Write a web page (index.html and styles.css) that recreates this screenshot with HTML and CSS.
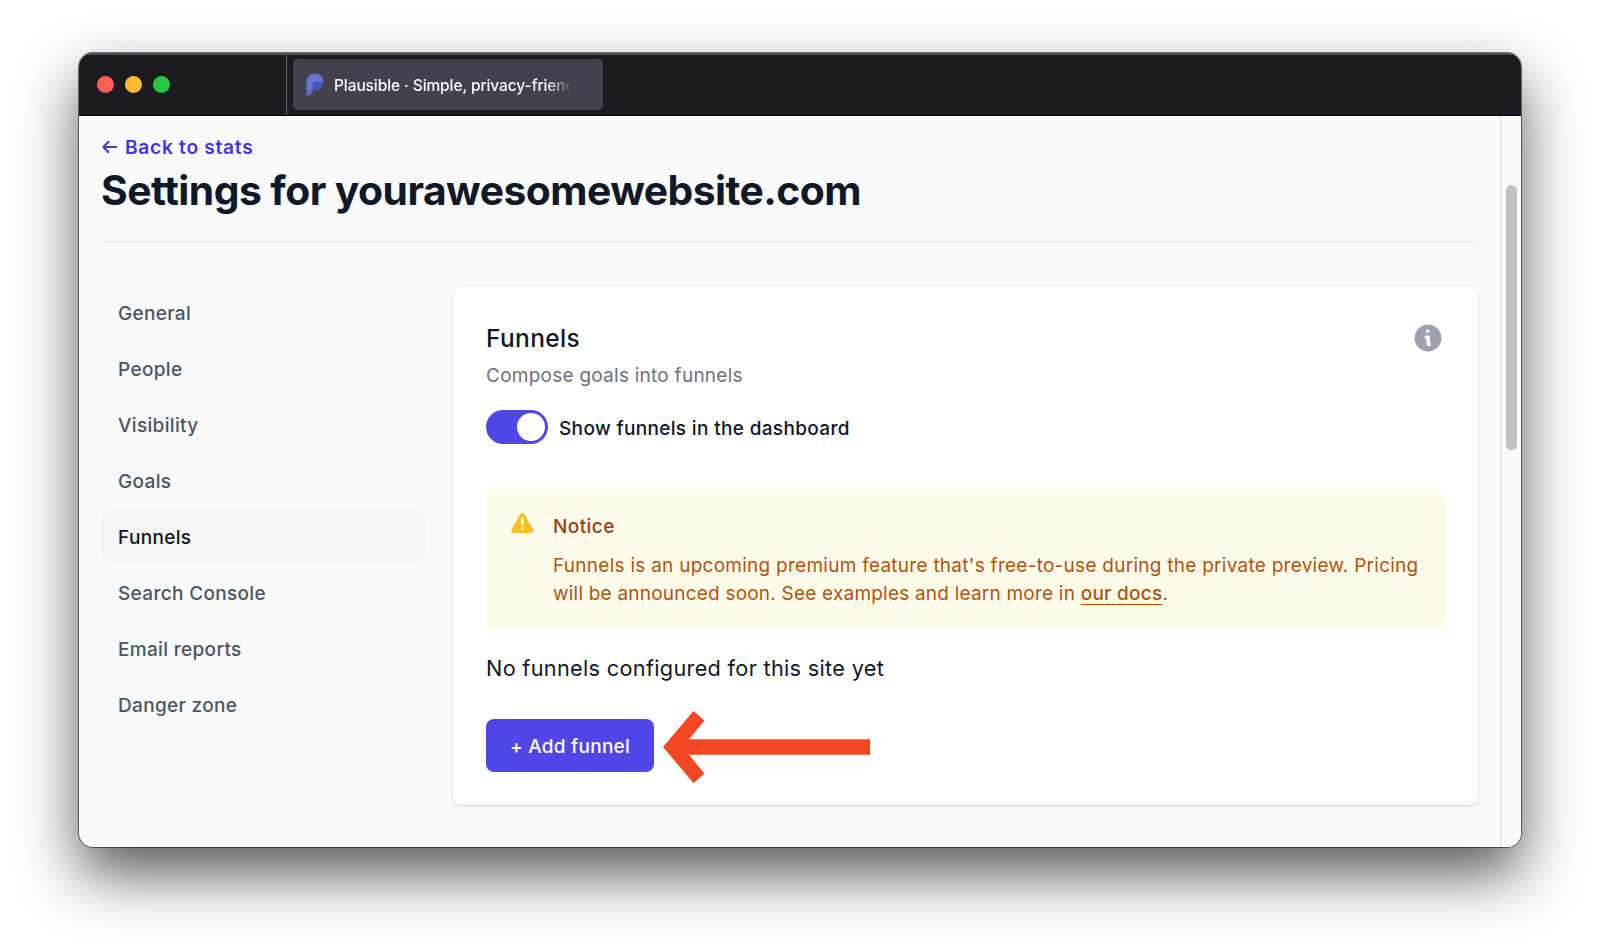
FILE: index.html
```html
<!DOCTYPE html>
<html lang="en">
<head>
<meta charset="utf-8">
<title>Plausible · Simple, privacy-friendly analytics</title>
<link rel="stylesheet" href="styles.css">
</head>
<body>
<div class="window">
  <header class="chrome">
    <div class="lights"><span class="light red"></span><span class="light yellow"></span><span class="light green"></span></div>
    <div class="tab">
      <svg class="logo" width="18" height="24" viewBox="0 0 18 24"><path d="M.5 7C1.300 3 4.500.4 9 .4c4.800 0 8.500 3.500 8.500 8.200S14 16.800 9.500 16.800H7c-.3 3.500-2.500 5.700-6.500 6z" fill="#6574cd"/><path d="M7 8.800h10.500c0 4.500-3.500 8-8 8H5.500C6.500 14.300 7 11.800 7 8.800z" fill="#4353c8"/><path d="M.5 14.500C2.500 16.800 4.500 17 7 16.800c-.3 3.500-2.500 5.700-6.500 6z" fill="#5f6bb4"/></svg>
      <span class="tab-title">Plausible · Simple, privacy-friend</span>
    </div>
  </header>
  <div class="viewport">
    <main class="page">
      <a class="back"><svg width="16" height="14" viewBox="0 0 16 14" fill="none" stroke="currentColor" stroke-width="2" stroke-linecap="round" stroke-linejoin="round"><path d="M14.300 7H1.500M6.500 1.800 1.400 7l5.100 5.200"/></svg><span>Back to stats</span></a>
      <h1 class="title">Settings for yourawesomewebsite.com</h1>
      <div class="columns">
        <nav class="sidebar">
          <a class="item">General</a>
          <a class="item">People</a>
          <a class="item">Visibility</a>
          <a class="item">Goals</a>
          <a class="item active">Funnels</a>
          <a class="item">Search Console</a>
          <a class="item">Email reports</a>
          <a class="item">Danger zone</a>
        </nav>
        <section class="card">
          <div class="card-head">
            <h2 class="card-title">Funnels</h2>
            <svg class="info" width="28" height="28" viewBox="0 0 28 28"><circle cx="14" cy="14" r="13.500" fill="#9ca3af"/><circle cx="13.800" cy="7.300" r="1.800" fill="#fff"/><path d="M12.200 13.300h2v7h1.300" fill="none" stroke="#fff" stroke-width="3.400" stroke-linecap="round" stroke-linejoin="round"/></svg>
          </div>
          <p class="subtitle">Compose goals into funnels</p>
          <div class="toggle-row"><span class="toggle"><span class="knob"></span></span><span class="toggle-label">Show funnels in the dashboard</span></div>
          <div class="notice">
            <svg class="warn" width="24" height="22" viewBox="0 0 24 22"><path d="M10.200 2.200c1-1.700 3.200-1.700 4.200 0l8.600 15.300c1 1.700-.2 3.500-2.100 3.500H3.700c-1.900 0-3.100-1.800-2.100-3.500z" fill="#fbbf24"/><path d="M12.300 6.900v4.700" stroke="#fffbeb" stroke-width="2.600" stroke-linecap="round"/><circle cx="12.300" cy="16.600" r="1.500" fill="#fffbeb"/></svg>
            <div class="notice-body">
              <h3 class="notice-title">Notice</h3>
              <p class="notice-text">Funnels is an upcoming premium feature that's free-to-use during the private preview. Pricing<br><span class="tight">will be announced soon. See examples and learn more in </span><a class="docs">our docs</a>.</p>
            </div>
          </div>
          <p class="empty">No funnels configured for this site yet</p>
          <div class="actions">
            <button class="add">+ Add funnel</button>
            <svg class="arrow" width="208" height="72" viewBox="0 0 208 72"><path d="M0 36 30.500 0 41.500 9.500 26 28.300H207v15.500H26L41.500 62.500 30.500 72z" fill="#f54822"/></svg>
          </div>
        </section>
      </div>
    </main>
    <div class="scrollbar"><div class="thumb"></div></div>
  </div>
</div>
</body>
</html>
```
FILE: styles.css
```css
* { box-sizing: border-box; }
body {
  margin: 0;
  height: 951px;
  overflow: hidden;
  padding: 53px 78px 0 79px;
  background: #fff;
  font-family: Inter, "Liberation Sans", sans-serif;
  color: #111827;
}
h1, h2, h3, p { margin: 0; }
svg { display: block; flex: none; }
.window {
  display: flex;
  flex-direction: column;
  width: 1442px;
  height: 794px;
  border-radius: 14px;
  overflow: hidden;
  background: #f9fafc;
  box-shadow: 0 0 0 1px rgba(0, 0, 0, .5), 0 27px 60px rgba(0, 0, 0, .66);
}
.chrome {
  display: flex;
  flex: none;
  height: 63px;
  background: #1c1b22;
  border-top: 2px solid #4f4f54;
  border-bottom: 1px solid #050409;
}
.lights {
  display: flex;
  align-items: center;
  gap: 11px;
  width: 208px;
  padding-left: 18px;
  padding-bottom: 2px;
  border-right: 1px solid #66656b;
}
.light { width: 17px; height: 17px; border-radius: 50%; }
.red { background: #ff5f57; }
.yellow { background: #febc2e; }
.green { background: #28c840; }
.tab {
  display: flex;
  align-items: center;
  width: 310px;
  height: 51px;
  margin: 4px 0 0 6px;
  padding-left: 13px;
  gap: 10px;
  border-radius: 5px;
  background: #42414d;
}
.tab-title {
  width: 260px;
  white-space: nowrap;
  font-size: 15.500px;
  line-height: 22px;
  font-weight: 500;
  letter-spacing: -.09px;
  color: #fbfbfe;
  padding-top: 2px;
  -webkit-mask-image: linear-gradient(to right, #000 212px, transparent 238px);
  mask-image: linear-gradient(to right, #000 212px, transparent 238px);
}
.viewport { display: flex; flex: 1; min-height: 0; }
.page { flex: 1; min-width: 0; padding: 17px 22px 0; }
.back {
  display: flex;
  align-items: center;
  gap: 7px;
  height: 28px;
  padding-left: 1px;
  font-size: 19.200px;
  font-weight: 600;
  letter-spacing: .7px;
  color: #4534e0;
}
.title {
  height: 81px;
  border-bottom: 1px solid #e2e4e8;
  font-size: 40.800px;
  line-height: 58px;
  font-weight: 700;
  letter-spacing: -.540px;
}
.columns { display: flex; gap: 28px; padding-top: 45px; }
.sidebar { display: flex; flex: none; flex-direction: column; gap: 6px; width: 324px; }
.item {
  height: 50px;
  padding-left: 17px;
  border-radius: 8px;
  font-size: 19px;
  line-height: 53px;
  font-weight: 500;
  letter-spacing: .33px;
  color: #4b5563;
}
.active { background: #f3f4f6; color: #111827; }
.card {
  flex: 1;
  min-width: 0;
  height: 518px;
  padding: 33px 33px 0 33px;
  border-radius: 8px;
  background: #fff;
  box-shadow: 0 1px 3px rgba(0, 0, 0, .12), 0 1px 2px rgba(0, 0, 0, .08);
}
.card-head { display: flex; justify-content: space-between; height: 35px; padding-right: 3px; align-items: center; }
.card-title { font-size: 24.500px; font-weight: 500; line-height: 35px; letter-spacing: .36px; padding-top: 1px; }
.subtitle { font-size: 19px; line-height: 28px; margin-top: 7px; letter-spacing: .25px; color: #6b7280; }
.toggle-row { display: flex; align-items: center; gap: 11px; margin-top: 20px; height: 34px; }
.toggle { display: flex; justify-content: flex-end; width: 62px; height: 34px; padding: 3px; border-radius: 17px; background: #4f46e5; }
.knob { width: 28px; height: 28px; border-radius: 50%; background: #fff; }
.toggle-label { font-size: 19px; font-weight: 500; letter-spacing: .34px; padding-top: 2px; }
.notice {
  display: flex;
  gap: 19px;
  height: 139px;
  margin-top: 45px;
  padding: 23px 0 0 24px;
  border-radius: 8px;
  background: #fffbeb;
}
.notice-body { padding-top: 1px; }
.notice-title { font-size: 19px; line-height: 28px; font-weight: 500; letter-spacing: .42px; color: #92400e; }
.notice-text { margin-top: 11px; font-size: 19px; line-height: 28px; letter-spacing: .26px; color: #b45309; white-space: nowrap; }
.tight { letter-spacing: .21px; }
.docs { font-weight: 500; text-decoration: underline; text-decoration-thickness: 1px; text-underline-offset: 4px; text-decoration-skip-ink: none; }
.empty { margin-top: 23px; font-size: 21.700px; line-height: 34px; letter-spacing: .31px; }
.actions { display: flex; gap: 9px; margin-top: 26px; align-items: center; height: 72px; }
.add {
  width: 168px;
  height: 53px;
  margin-bottom: 3px;
  border: 0;
  border-radius: 8px;
  background: #4f46e5;
  color: #fff;
  font: 500 19px/55px Inter, "Liberation Sans", sans-serif;
  letter-spacing: .26px;
  padding: 0;
}
.scrollbar { flex: none; width: 21px; background: #fafafa; border-left: 2px solid #e8e8e9; padding: 69px 0 0 4px; }
.thumb { width: 11px; height: 265px; border-radius: 6px; background: #c1c1c1; }
```
